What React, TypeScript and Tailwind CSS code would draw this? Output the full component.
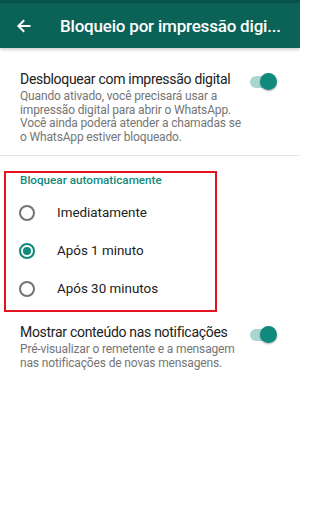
import React from "react";

function Toggle() {
  return (
    <div className="relative w-[28px] h-[18px] flex items-center shrink-0">
      <div className="w-[24px] h-[12px] rounded-full bg-[#a9d6d0] ml-[1px]" />
      <div className="absolute right-0 top-0 w-[17px] h-[17px] rounded-full bg-[#0f8a7c] shadow-[0_1px_2px_rgba(0,0,0,0.35)]" />
    </div>
  );
}

function Radio({ checked, label }: { checked?: boolean; label: string }) {
  return (
    <div className="h-[38px] flex items-center pl-[13px]">
      <div
        className={
          checked
            ? "w-[16px] h-[16px] rounded-full border-2 border-[#0f8a7c] flex items-center justify-center shrink-0"
            : "w-[16px] h-[16px] rounded-full border-2 border-[#737373] shrink-0"
        }
      >
        {checked && <div className="w-[8px] h-[8px] rounded-full bg-[#0f8a7c]" />}
      </div>
      <span className="ml-[22px] text-[13.4px] leading-[18px] text-[#212121]">{label}</span>
    </div>
  );
}

export default function App() {
  return (
    <div
      className="w-[300px] h-[516px] bg-white overflow-hidden"
      style={{ fontFamily: "Roboto, 'Noto Sans', sans-serif" }}
    >
      <div className="h-[3px] bg-[#095448]" />
      <div className="h-[45px] bg-[#0b6257] flex items-center shadow-[0_2px_3px_rgba(0,0,0,0.18)] relative">
        <svg
          width="14"
          height="14"
          viewBox="0 0 14 14"
          className="ml-[17px] shrink-0"
          fill="none"
          stroke="white"
          strokeWidth="2"
        >
          <path d="M13.5 7H1.5" />
          <path d="M7.2 1.2L1.4 7l5.8 5.8" />
        </svg>
        <div className="ml-[29px] pr-[10px] text-[17px] tracking-[-0.2px] font-medium text-white leading-[22px] whitespace-nowrap overflow-hidden">
          Bloqueio por impressão digi...
        </div>
      </div>

      <div className="flex pl-[20px] pr-[23px] pt-[21px] pb-[11px]">
        <div className="flex-1">
          <div className="text-[14px] tracking-[-0.3px] leading-[20px] text-[#212121]">
            Desbloquear com impressão digital
          </div>
          <div className="text-[12px] tracking-[-0.15px] leading-[13.6px] text-[#757575] mt-[1px] pr-[6px]">
            Quando ativado, você precisará usar a impressão digital para abrir o WhatsApp. Você ainda poderá atender a chamadas se o WhatsApp estiver bloqueado.
          </div>
        </div>
        <div className="pt-[4px]">
          <Toggle />
        </div>
      </div>

      <div className="h-px bg-[#e6e6e6]" />

      <div className="mt-[15px] ml-[4px] w-[213px] border-2 border-[#e0131f] pb-[2px]">
        <div className="pl-[14px] text-[11.7px] leading-[14px] font-medium text-[#12897b]">
          Bloquear automaticamente
        </div>
        <div className="mt-[7px]">
          <Radio label="Imediatamente" />
          <Radio checked label="Após 1 minuto" />
          <Radio label="Após 30 minutos" />
        </div>
      </div>

      <div className="flex pl-[20px] pr-[23px] pt-[10px]">
        <div className="flex-1">
          <div className="text-[14px] tracking-[-0.3px] leading-[20px] text-[#212121]">
            Mostrar conteúdo nas notificações
          </div>
          <div className="text-[12px] tracking-[-0.15px] leading-[13.6px] text-[#757575] mt-[1px]">
            Pré-visualizar o remetente e a mensagem nas notificações de novas mensagens.
          </div>
        </div>
        <div className="pt-[4px]">
          <Toggle />
        </div>
      </div>
    </div>
  );
}
